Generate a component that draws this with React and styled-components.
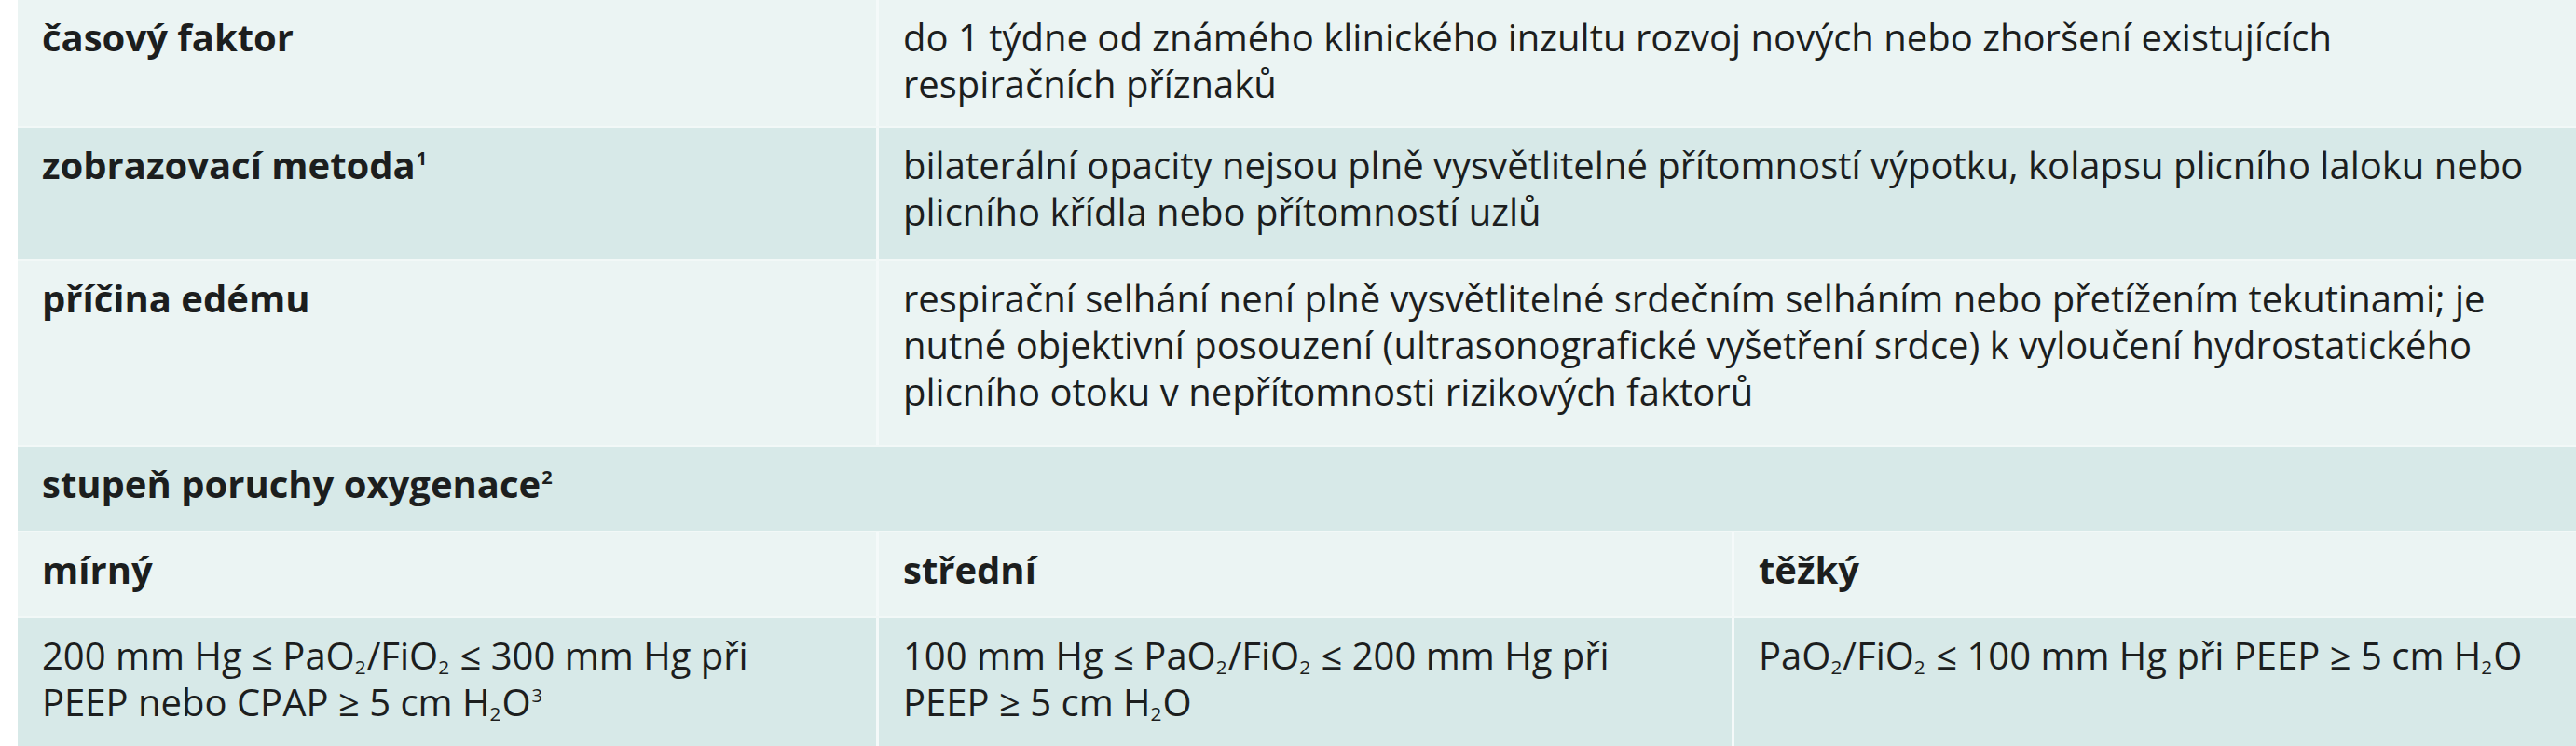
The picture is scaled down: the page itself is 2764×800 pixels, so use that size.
import React from "react";
import styled, { createGlobalStyle } from "styled-components";

const GlobalStyle = createGlobalStyle`
  html, body { margin: 0; padding: 0; background: #ffffff; }
  body { font-family: "Open Sans", "Liberation Sans", sans-serif; }
  * { box-sizing: border-box; }
`;

const Table = styled.div`
  margin-left: 19px;
  width: 2745px;
  display: flex;
  flex-direction: column;
  font-size: 40px;
  line-height: 50px;
  color: #1c1e1e;
`;

const Row = styled.div`
  display: grid;
  grid-template-columns: ${(p) => p.$cols || "921px 1fr"};
  min-height: ${(p) => p.$h}px;
  background: ${(p) => (p.$dark ? "#d7e9e8" : "#ebf4f3")};
  & + & { border-top: 2px solid #f2f8f7; }
`;

const Cell = styled.div`
  padding: 15px 20px 0 26px;
  font-weight: ${(p) => (p.$bold ? 700 : 400)};
  white-space: nowrap;
  overflow: hidden;
  & + & { border-left: 3px solid #f4f9f9; }
`;

const Sub = styled.sub`
  font-size: 0.52em;
  line-height: 0;
  vertical-align: -0.22em;
  padding-right: 1px;
`;

const Sup = styled.sup`
  font-size: 0.5em;
  line-height: 0;
  vertical-align: 0.75em;
  padding-left: 1px;
`;

const Ratio = () => (
  <>
    PaO<Sub>2</Sub>/FiO<Sub>2</Sub>
  </>
);

const Water = () => (
  <>
    H<Sub>2</Sub>O
  </>
);

export default function App() {
  return (
    <>
      <GlobalStyle />
      <Table>
        <Row $h={135}>
          <Cell $bold>časový faktor</Cell>
          <Cell>
            do 1 týdne od známého klinického inzultu rozvoj nových nebo zhoršení existujících
            <br />
            respiračních příznaků
          </Cell>
        </Row>
        <Row $h={143} $dark>
          <Cell $bold>
            zobrazovací metoda<Sup>1</Sup>
          </Cell>
          <Cell>
            bilaterální opacity nejsou plně vysvětlitelné přítomností výpotku, kolapsu plicního laloku nebo
            <br />
            plicního křídla nebo přítomností uzlů
          </Cell>
        </Row>
        <Row $h={199}>
          <Cell $bold>příčina edému</Cell>
          <Cell>
            respirační selhání není plně vysvětlitelné srdečním selháním nebo přetížením tekutinami; je
            <br />
            nutné objektivní posouzení (ultrasonografické vyšetření srdce) k vyloučení hydrostatického
            <br />
            plicního otoku v nepřítomnosti rizikových faktorů
          </Cell>
        </Row>
        <Row $h={92} $dark $cols="1fr">
          <Cell $bold>
            stupeň poruchy oxygenace<Sup>2</Sup>
          </Cell>
        </Row>
        <Row $h={92} $cols="921px 918px 1fr">
          <Cell $bold>mírný</Cell>
          <Cell $bold>střední</Cell>
          <Cell $bold>těžký</Cell>
        </Row>
        <Row $h={139} $dark $cols="921px 918px 1fr">
          <Cell>
            200 mm Hg ≤ <Ratio /> ≤ 300 mm Hg při
            <br />
            PEEP nebo CPAP ≥ 5 cm <Water />
            <Sup>3</Sup>
          </Cell>
          <Cell>
            100 mm Hg ≤ <Ratio /> ≤ 200 mm Hg při
            <br />
            PEEP ≥ 5 cm <Water />
          </Cell>
          <Cell>
            <Ratio /> ≤ 100 mm Hg při PEEP ≥ 5 cm <Water />
          </Cell>
        </Row>
      </Table>
    </>
  );
}
